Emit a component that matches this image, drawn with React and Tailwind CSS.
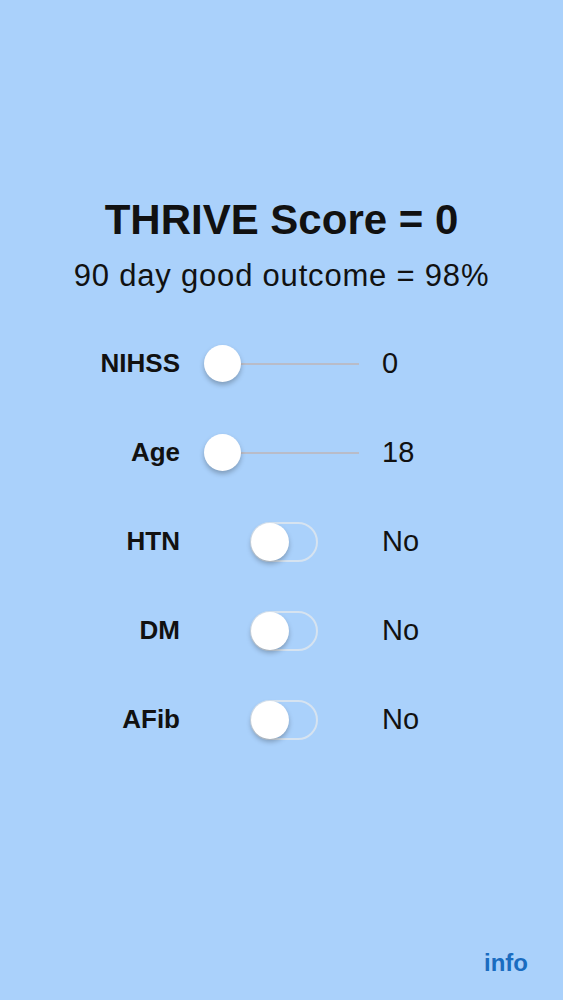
import { useState } from 'react'

const font = { fontFamily: '"Liberation Sans", Arial, sans-serif' }

function Slider({ value, min, max }) {
    const pct = (value - min) / (max - min)
    return (
        <div className="relative h-[38px] w-[155px]">
            {/* track */}
            <div className="absolute left-[18px] right-0 top-1/2 h-[2px] -translate-y-1/2 bg-[#b9bcc8]" />
            {/* thumb */}
            <div
                className="absolute top-0 h-[37px] w-[37px] rounded-full bg-white shadow-[0_3px_5px_rgba(0,0,0,0.25)]"
                style={{ left: `${pct * 118}px` }}
            />
        </div>
    )
}

function Toggle({ on }) {
    return (
        <div className="relative ml-[46px] h-[40px] w-[68px] rounded-full border-2 border-[#d6e3f0]">
            <div
                className={`absolute top-[-1px] h-[38px] w-[38px] rounded-full bg-white shadow-[0_3px_5px_rgba(0,0,0,0.25)] ${on ? 'left-[27px]' : 'left-[-1px]'}`}
            />
        </div>
    )
}

function Row({ label, children, value }) {
    return (
        <div className="flex h-[89px] items-center">
            <div className="w-[180px] text-right text-[26px] font-bold text-[#111]">{label}</div>
            <div className="ml-[24px] flex w-[155px] items-center">{children}</div>
            <div className="ml-[23px] text-[29px] text-[#111]">{value}</div>
        </div>
    )
}

export default function App() {
    const [nihss] = useState(0)
    const [age] = useState(18)

    return (
        <div className="flex h-[1000px] w-full flex-col bg-[#aad1fb]" style={font}>
            <div className="pt-[196px] text-center">
                <h1 className="text-[42px] font-bold leading-[48px] text-[#111]">THRIVE Score = 0</h1>
                <p className="mt-[13px] text-[31px] leading-[38px] tracking-[0.8px] text-[#111]">90 day good outcome = 98%</p>
            </div>

            <div className="mt-[24px] flex flex-col">
                <Row label="NIHSS" value={nihss}>
                    <Slider value={nihss} min={0} max={42} />
                </Row>
                <Row label="Age" value={age}>
                    <Slider value={age} min={18} max={100} />
                </Row>
                <Row label="HTN" value="No">
                    <Toggle on={false} />
                </Row>
                <Row label="DM" value="No">
                    <Toggle on={false} />
                </Row>
                <Row label="AFib" value="No">
                    <Toggle on={false} />
                </Row>
            </div>

            <div className="mt-auto flex justify-end pb-[19px] pr-[35px]">
                <span className="text-[24px] font-bold text-[#1a6cc0]">info</span>
            </div>
        </div>
    )
}
